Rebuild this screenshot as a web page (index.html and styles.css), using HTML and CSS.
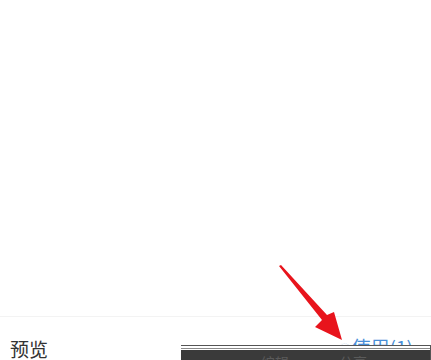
FILE: index.html
```html
<!DOCTYPE html>
<html lang="zh">
<head>
<meta charset="utf-8">
<link rel="stylesheet" href="styles.css">
</head>
<body>
<div class="page">
  <div class="canvas"></div>
  <div class="footer">
    <span class="title">预览</span>
    <span class="use"><span class="ghost">◌</span>使用(1)</span>
  </div>
  <div class="bar">
    <div class="bar-inner"><span>编辑</span><span>分享</span></div>
  </div>
  <svg class="arrow" width="431" height="360" viewBox="0 0 431 360">
    <polygon points="279,266 281,265 327,315 334,312 342,340 315,327 322,320" fill="#e8141c"/>
  </svg>
</div>
</body>
</html>
```
FILE: styles.css
```css
html, body {
  margin: 0;
  padding: 0;
  background: #fff;
}
.page {
  position: relative;
  width: 431px;
  height: 360px;
  overflow: hidden;
  font-family: "Noto Sans CJK SC", "Noto Sans", sans-serif;
}
.canvas {
  height: 316px;
  border-bottom: 1px solid #f3f3f3;
}
.footer {
  display: flex;
  justify-content: space-between;
  align-items: flex-start;
  padding: 19px 18px 0 10px;
}
.title {
  font-size: 19px;
  line-height: 26px;
  color: #333;
}
.use {
  font-size: 19px;
  line-height: 26px;
  color: #4a8fd8;
  margin-top: -2px;
}
.ghost {
  color: #d6e4f2;
  font-size: 14px;
}
.bar {
  position: absolute;
  left: 181px;
  top: 345px;
  width: 249px;
  height: 15px;
  border-top: 1px solid #555;
  border-right: 1px solid #555;
  background: #fff;
}
.bar-inner {
  margin-top: 2px;
  border-top: 1px solid #8a8a8a;
  height: 20px;
  background: #3a3a3a;
  box-shadow: inset 0 1px 0 #fff;
  padding-left: 80px;
  display: flex;
  gap: 50px;
  font-size: 14px;
  line-height: 26px;
  color: #5a5a5a;
}
.arrow {
  position: absolute;
  left: 0;
  top: 0;
}
```
